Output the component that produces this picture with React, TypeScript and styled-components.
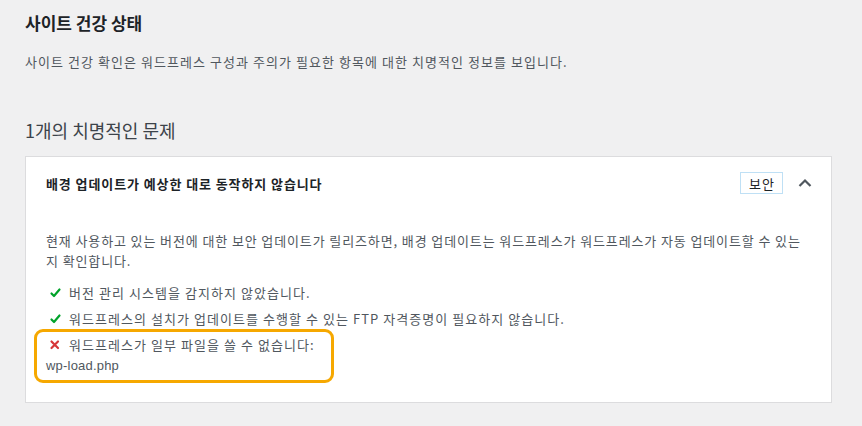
import React from 'react'
import styled, { createGlobalStyle } from 'styled-components'

const GlobalStyle = createGlobalStyle`
  html, body {
    margin: 0;
    padding: 0;
    background: #f0f0f1;
  }
  body {
    font-family: "Noto Sans", "Noto Sans CJK KR", sans-serif;
    color: #3c434a;
  }
`

const Page = styled.div`
  padding: 10px 30px 24px 25px;
  box-sizing: border-box;
  width: 862px;
`

const Title = styled.h1`
  margin: 0;
  font-family: "Noto Sans CJK KR", sans-serif;
  font-size: 17px;
  line-height: 26px;
  font-weight: 700;
  color: #1d2327;
`

const Intro = styled.p`
  margin: 16px 0 0;
  font-family: "Noto Sans CJK KR", sans-serif;
  font-size: 13px;
  line-height: 20px;
  letter-spacing: 1.05px;
  color: #50575e;
`

const SectionHeading = styled.h2`
  margin: 45px 0 0;
  font-family: "Noto Sans CJK KR", sans-serif;
  font-size: 18px;
  line-height: 26px;
  font-weight: 400;
  color: #3c434a;
`

const Panel = styled.section`
  margin-top: 13px;
  background: #fff;
  border: 1px solid #dcdcde;
`

const PanelHeader = styled.div`
  height: 52px;
  padding: 0 20px;
  display: flex;
  align-items: center;
  justify-content: space-between;
`

const PanelTitle = styled.h3`
  margin: 0;
  font-family: "Noto Sans CJK KR", sans-serif;
  font-size: 13px;
  font-weight: 700;
  letter-spacing: 0.9px;
  color: #1d2327;
`

const HeaderActions = styled.div`
  display: flex;
  align-items: center;
  gap: 12px;
  margin-right: -4px;
`

const Badge = styled.span`
  display: inline-flex;
  align-items: center;
  height: 20px;
  padding: 0 7px 0 8px;
  border: 1px solid #bfe0f5;
  font-family: "Noto Sans CJK KR", sans-serif;
  font-size: 13px;
  letter-spacing: 1px;
  color: #1d2327;
`

const Toggle = styled.button`
  width: 20px;
  height: 20px;
  padding: 0;
  border: 0;
  background: none;
  display: flex;
  align-items: center;
  justify-content: center;
  color: #50575e;
`

const PanelBody = styled.div`
  padding: 22px 20px 26px;
`

const BodyText = styled.p`
  margin: 0;
  font-family: "Noto Sans CJK KR", sans-serif;
  font-size: 13px;
  line-height: 20px;
  letter-spacing: 0.88px;
  color: #50575e;
`

const CheckList = styled.ul`
  list-style: none;
  margin: 12px 0 0;
  padding: 0;
`

const CheckItem = styled.li<{ $flagged?: boolean }>`
  position: relative;
  margin-top: 6px;
  font-family: "Noto Sans CJK KR", sans-serif;
  font-size: 13px;
  line-height: 20px;
  letter-spacing: 1.05px;
  color: #50575e;

  &:first-child {
    margin-top: 0;
  }

  ${p => p.$flagged && `
    &::after {
      content: "";
      position: absolute;
      left: -12px;
      top: -6px;
      width: 300px;
      bottom: -7px;
      box-sizing: border-box;
      border: 3.5px solid #f6a800;
      border-radius: 9px;
      pointer-events: none;
    }
  `}
`

const StatusIcon = styled.span`
  display: inline-block;
  width: 20px;
  height: 20px;
  margin-right: 3px;
  vertical-align: top;
`

const FileName = styled.span`
  font-family: "Liberation Sans", sans-serif;
  letter-spacing: 0.2px;
`

const CheckIcon = () => (
  <StatusIcon>
    <svg width="20" height="20" viewBox="0 0 20 20">
      <path d="M5.5 10.5 L8 13 L13.5 6.5" fill="none" stroke="#00a32a" strokeWidth="2.2" strokeLinecap="round" strokeLinejoin="round" />
    </svg>
  </StatusIcon>
)

const ErrorIcon = () => (
  <StatusIcon>
    <svg width="20" height="20" viewBox="0 0 20 20">
      <path d="M5.5 6.5 L12 13 M12 6.5 L5.5 13" fill="none" stroke="#d63638" strokeWidth="2.2" strokeLinecap="round" />
    </svg>
  </StatusIcon>
)

const App = () => {
  return (
    <Page>
      <GlobalStyle />
      <Title>사이트 건강 상태</Title>
      <Intro>사이트 건강 확인은 워드프레스 구성과 주의가 필요한 항목에 대한 치명적인 정보를 보입니다.</Intro>

      <SectionHeading>1개의 치명적인 문제</SectionHeading>

      <Panel>
        <PanelHeader>
          <PanelTitle>배경 업데이트가 예상한 대로 동작하지 않습니다</PanelTitle>
          <HeaderActions>
            <Badge>보안</Badge>
            <Toggle aria-label="접기">
              <svg width="16" height="16" viewBox="0 0 16 16">
                <path d="M2.5 11 L8 5.5 L13.5 11" fill="none" stroke="currentColor" strokeWidth="2.2" />
              </svg>
            </Toggle>
          </HeaderActions>
        </PanelHeader>
        <PanelBody>
          <BodyText>
            현재 사용하고 있는 버전에 대한 보안 업데이트가 릴리즈하면, 배경 업데이트는 워드프레스가 워드프레스가 자동 업데이트할 수 있는지 확인합니다.
          </BodyText>
          <CheckList>
            <CheckItem>
              <CheckIcon />버전 관리 시스템을 감지하지 않았습니다.
            </CheckItem>
            <CheckItem>
              <CheckIcon />워드프레스의 설치가 업데이트를 수행할 수 있는 FTP 자격증명이 필요하지 않습니다.
            </CheckItem>
            <CheckItem $flagged>
              <ErrorIcon />워드프레스가 일부 파일을 쓸 수 없습니다:
              <br />
              <FileName>wp-load.php</FileName>
            </CheckItem>
          </CheckList>
        </PanelBody>
      </Panel>
    </Page>
  )
}

export default App
